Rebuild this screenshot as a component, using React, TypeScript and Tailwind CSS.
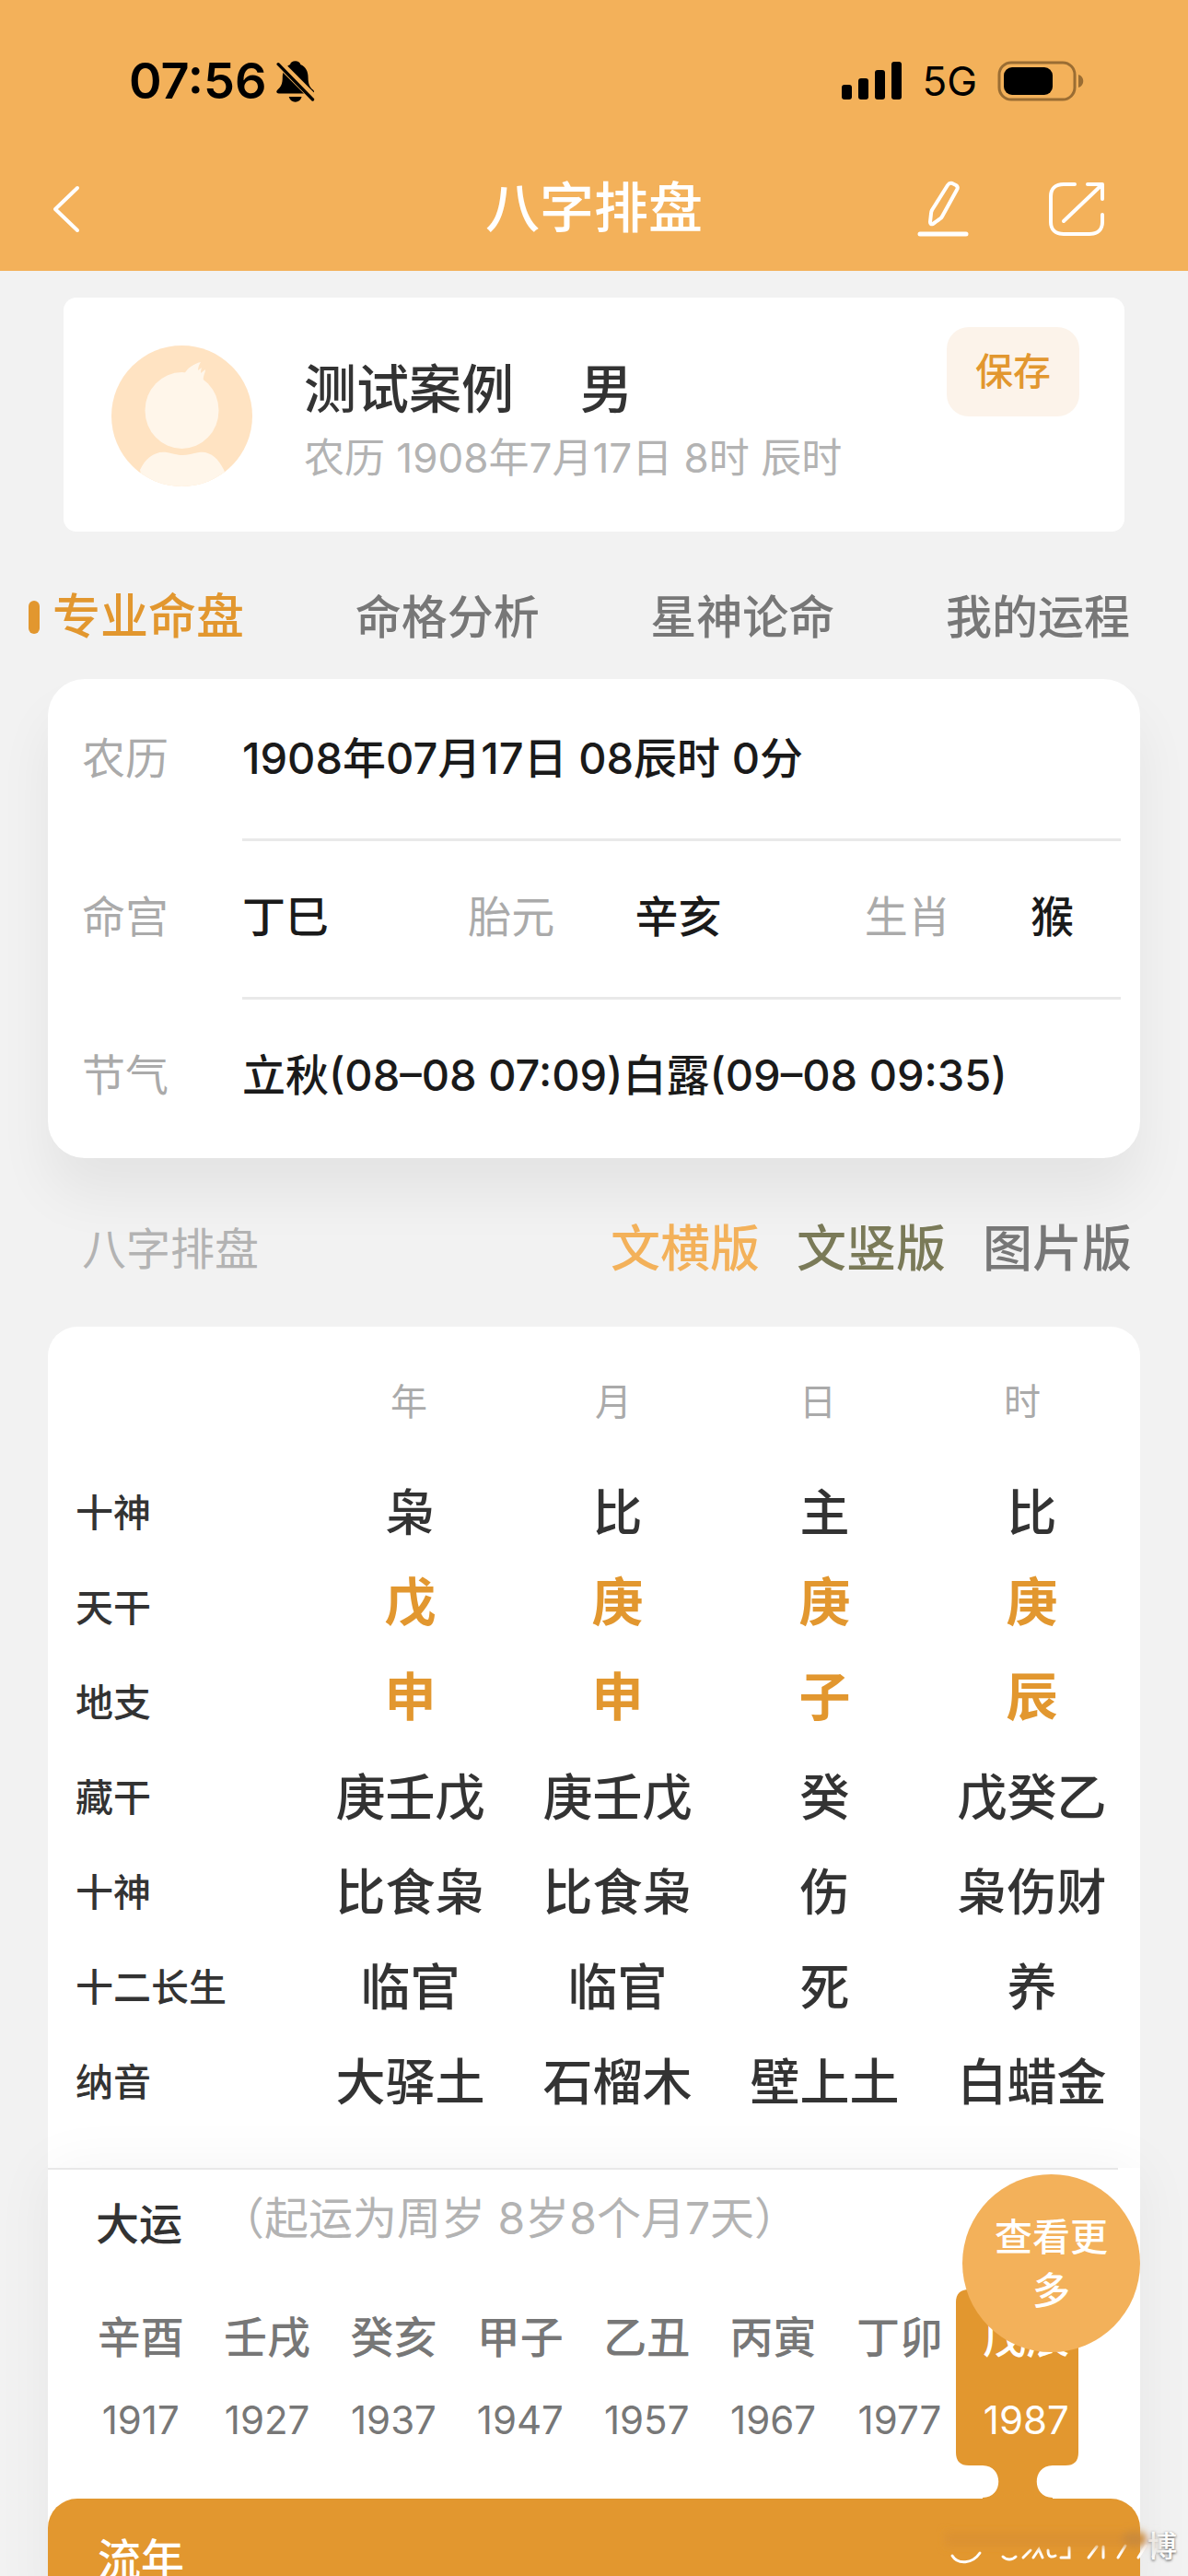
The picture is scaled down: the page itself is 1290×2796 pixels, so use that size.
const tabs = ["专业命盘", "命格分析", "星神论命", "我的运程"];

const pillars = ["年", "月", "日", "时"];

const chartRows = [
  { label: "十神", values: ["枭", "比", "主", "比"] },
  { label: "天干", values: ["戊", "庚", "庚", "庚"], gold: true },
  { label: "地支", values: ["申", "申", "子", "辰"], gold: true },
  { label: "藏干", values: ["庚壬戊", "庚壬戊", "癸", "戊癸乙"] },
  { label: "十神", values: ["比食枭", "比食枭", "伤", "枭伤财"] },
  { label: "十二长生", values: ["临官", "临官", "死", "养"] },
  { label: "纳音", values: ["大驿土", "石榴木", "壁上土", "白蜡金"] },
];

const luckCycles = [
  { name: "辛酉", year: 1917 },
  { name: "壬戌", year: 1927 },
  { name: "癸亥", year: 1937 },
  { name: "甲子", year: 1947 },
  { name: "乙丑", year: 1957 },
  { name: "丙寅", year: 1967 },
  { name: "丁卯", year: 1977 },
  { name: "戊辰", year: 1987, active: true },
];

function StatusBar() {
  return (
    <div className="flex h-[176px] items-center justify-between pl-[140px] pr-[113px] text-black">
      <div className="flex items-center gap-[10px]">
        <span className="text-[54px] font-semibold leading-none">07:56</span>
        <svg className="h-[47px] w-[42px]" viewBox="0 0 126 142">
          <path
            d="M62 4c9 0 15 4 17 11 17 7 25 22 25 43 0 22 6 32 17 41 5 5 2 11-4 11H8c-8 0-10-6-5-11 13-12 17-22 17-41 0-21 9-36 25-43 2-7 8-11 17-11Z"
            fill="#000"
          />
          <path d="M41 121h42c-3 11-11 17-21 17s-18-6-21-17Z" fill="#000" />
          <path d="M2 4 122 124" stroke="#f3b15a" strokeWidth="26" />
          <path d="M6 14 119 130" stroke="#000" strokeWidth="10" strokeLinecap="round" />
        </svg>
      </div>

      <div className="flex items-center gap-[22px]">
        <svg className="h-[42px] w-[65px]" viewBox="0 0 65 42">
          <rect x="0" y="25" width="11" height="16" rx="3" />
          <rect x="18" y="18" width="11" height="23" rx="3" />
          <rect x="36" y="9" width="11" height="32" rx="3" />
          <rect x="54" y="0" width="11" height="41" rx="3" />
        </svg>
        <span className="text-[44px] leading-none">5G</span>
        <svg className="h-[44px] w-[94px]" viewBox="0 0 94 44">
          <rect x="2" y="2" width="82" height="40" rx="13" fill="none" stroke="#9a6d33" strokeWidth="3" />
          <rect x="7" y="7" width="53" height="30" rx="9" />
          <path d="M88 15c7 2 7 12 0 14Z" fill="#9a6d33" />
        </svg>
      </div>
    </div>
  );
}

function NavBar() {
  return (
    <nav className="grid h-[118px] grid-cols-3 items-center pb-4 pl-14 pr-[90px] text-white">
      <button aria-label="返回" className="justify-self-start">
        <svg className="h-[52px] w-[32px]" viewBox="0 0 32 52" fill="none" stroke="currentColor" strokeWidth="4" strokeLinecap="round" strokeLinejoin="round">
          <path d="M28 3 4 26l24 23" />
        </svg>
      </button>

      <h1 className="justify-self-center whitespace-nowrap pb-1 pl-[34px] text-[59px] font-medium leading-none">八字排盘</h1>

      <div className="flex items-center gap-[86px] justify-self-end">
        <button aria-label="编辑">
          <svg className="h-[62px] w-[56px]" viewBox="0 0 56 62" fill="none" stroke="currentColor" strokeWidth="4" strokeLinecap="round" strokeLinejoin="round">
            <path d="M33 5q2-3 5-2l4 2q3 2 1 5L27 39q-1 2-3 3l-7 5q-3 1-3-2l1-9q0-2 1-4Z" />
            <path d="M3 58h50" strokeWidth="5" />
          </svg>
        </button>
        <button aria-label="分享">
          <svg className="h-[62px] w-[62px]" viewBox="0 0 62 62" fill="none" stroke="currentColor" strokeWidth="4" strokeLinecap="round" strokeLinejoin="round">
            <path d="M29 4H17C8 4 3 9 3 17v28c0 8 5 13 14 13h28c9 0 14-5 14-13v-8" />
            <path d="M43 4h16v16M58 5 17 44" />
          </svg>
        </button>
      </div>
    </nav>
  );
}

function Avatar() {
  return (
    <svg className="h-[153px] w-[153px] shrink-0" viewBox="0 0 153 153">
      <clipPath id="avatar">
        <circle cx="76.5" cy="76.5" r="76.5" />
      </clipPath>
      <g clipPath="url(#avatar)" fill="#fff6ea">
        <rect width="153" height="153" fill="#ffe3c2" />
        <ellipse cx="76.5" cy="70.5" rx="40" ry="41.5" />
        <path d="M79 31c4-7 10-11 18-13-2 3-3 6-3 9l4-3c-1 3-1 4-1 6l5-4c0 4-3 7-2 13l-8 4Z" />
        <path d="M31 135c6-13 17-21 29-19 7 1 11 3 17 3s11-2 18-3c12-2 22 7 28 21l-6 20H36Z" />
      </g>
    </svg>
  );
}

function ProfileCard() {
  return (
    <section className="mx-[69px] mt-[29px] flex h-[254px] rounded-[14px] bg-white pl-[52px] pr-[49px]">
      <div className="flex flex-1 pt-[52px]">
        <Avatar />
        <div className="pl-14 pt-[14px]">
          <h2 className="flex gap-[72px] text-[57px] font-medium leading-[68px] text-[#333]">
            <span>测试案例</span>
            <span>男</span>
          </h2>
          <p className="pt-[6px] text-[44px] leading-[68px] text-[#b3b3b3]">农历 1908年7月17日 8时 辰时</p>
        </div>
      </div>
      <button className="mt-8 h-[97px] w-[144px] rounded-3xl bg-[#fcf3ea] text-[41px] font-medium text-[#e2972f]">
        保存
      </button>
    </section>
  );
}

function Tabs() {
  return (
    <div className="flex h-[160px] items-center justify-between pl-[31px] pr-[63px] pt-[26px]">
      {tabs.map((tab, i) =>
        i === 0 ? (
          <button key={tab} className="flex items-center gap-[14px] text-[52px] font-medium leading-none text-[#e2972f]">
            <span className="h-[36px] w-3 rounded-full bg-[#e2972f]" />
            {tab}
          </button>
        ) : (
          <button key={tab} className="text-[50px] font-medium leading-none text-[#777]">
            {tab}
          </button>
        )
      )}
    </div>
  );
}

function InfoCard() {
  return (
    <dl className="mx-[52px] rounded-[40px] bg-white pt-1 text-[47px] leading-none text-[#1a1a1a] shadow-[0_40px_60px_rgba(0,0,0,0.06)]">
      <div className="flex h-[172px] pl-[37px] pr-[21px]">
        <dt className="flex w-[174px] items-center pb-[10px] text-[#aaa]">农历</dt>
        <dd className="flex flex-1 items-center border-b-3 border-[#e9e9e9] pb-[7px] font-medium">
          1908年07月17日 08辰时 0分
        </dd>
      </div>

      <div className="flex h-[172px] pl-[37px] pr-[21px]">
        <dt className="flex w-[174px] items-center pb-[10px] text-[#aaa]">命宫</dt>
        <dd className="grid flex-1 grid-cols-[245fr_181fr_249fr_180fr_98fr] items-center border-b-3 border-[#e9e9e9] pb-[7px] font-medium">
          <span>丁巳</span>
          <span className="font-normal text-[#aaa]">胎元</span>
          <span>辛亥</span>
          <span className="font-normal text-[#aaa]">生肖</span>
          <span>猴</span>
        </dd>
      </div>

      <div className="flex h-[172px] pl-[37px] pr-[21px]">
        <dt className="flex w-[174px] items-center pb-[10px] text-[#aaa]">节气</dt>
        <dd className="flex flex-1 items-center whitespace-nowrap pb-[10px] font-medium">
          立秋(08–08 07:09)白露(09–08 09:35)
        </dd>
      </div>
    </dl>
  );
}

function ChartTable() {
  return (
    <table className="mx-[52px] block rounded-t-[32px] bg-white pb-[41px] text-[#333]">
      <thead className="block">
        <tr className="grid h-[151px] grid-cols-[281px_repeat(4,1fr)] items-center pr-[17px] pt-3 text-[40px] leading-none text-[#aaa]">
          <td />
          {pillars.map((p) => (
            <th key={p} className="font-normal">{p}</th>
          ))}
        </tr>
      </thead>
      <tbody className="block">
        {chartRows.map((row, i) => (
          <tr key={i} className="grid h-[103px] grid-cols-[281px_repeat(4,1fr)] items-center pr-[5px] leading-none">
            <th className="whitespace-nowrap pl-[30px] text-left text-[41px] font-medium">{row.label}</th>
            {row.values.map((v, j) => (
              <td
                key={j}
                className={
                  row.gold
                    ? "whitespace-nowrap pb-[14px] text-center text-[56px] font-bold text-[#e2972f]"
                    : "whitespace-nowrap text-center text-[54px] font-medium"
                }
              >
                {v}
              </td>
            ))}
          </tr>
        ))}
      </tbody>
    </table>
  );
}

function LuckSection() {
  return (
    <section className="relative mx-[52px] bg-white shadow-[0_0_60px_rgba(0,0,0,0.05)]">
      <div className="mr-6 h-[2px] bg-[#e8e8e8]" />

      <div className="flex h-[118px] items-center gap-[41px] pl-[52px] leading-none">
        <h3 className="pb-[2px] text-[47px] font-medium text-[#333]">大运</h3>
        <p className="pb-3 text-[48px] text-[#b3b3b3]">（起运为周岁 8岁8个月7天）</p>
      </div>

      <div className="mt-5 grid grid-cols-8 pb-[39px] pl-[32px] pr-[55px] text-center text-[#777]">
        {luckCycles.map((c) => (
          <button key={c.year} className={c.active ? "relative text-white" : ""}>
            {c.active && (
              <svg className="absolute -left-2 -top-2 h-[228px] w-[133px]" viewBox="0 0 133 228" fill="#e2972f">
                <path d="M14 0H119Q133 0 133 14V177Q133 191 119 191H105C82 191 82 226 105 226V228H29V226C52 226 52 191 29 191H14Q0 191 0 177V14Q0 0 14 0Z" />
              </svg>
            )}
            <span className="relative block text-[47px] font-medium leading-[88px]">{c.name}</span>
            <span className="relative block text-[42px] leading-[92px]">{c.year}</span>
          </button>
        ))}
      </div>

      <div className="rounded-t-[32px] bg-[#e2972f] pb-9 pl-[54px] pt-9">
        <h3 className="text-[47px] font-medium leading-[60px] text-white">流年</h3>
      </div>

      <button className="absolute right-0 top-[7px] h-[193px] w-[193px] rounded-full bg-[#f3b15a] px-8 text-[41px] font-medium leading-[58px] text-white">
        查看更多
      </button>
    </section>
  );
}

function Watermark() {
  return (
    <div className="pointer-events-none absolute bottom-0 right-0 flex h-[60px] w-[280px] items-center justify-end pb-1 pr-3">
      <span className="text-[32px] font-medium leading-none text-white [text-shadow:0_1px_3px_rgba(0,0,0,0.7)]">博</span>
      <svg className="absolute inset-0 h-full w-full" viewBox="0 0 280 60">
        <defs>
          <filter id="smear" x="-20%" y="-50%" width="140%" height="200%">
            <feGaussianBlur stdDeviation="4" />
          </filter>
        </defs>
        <g fill="none" stroke="#fff" strokeWidth="3" strokeLinecap="round">
          <path d="M24 38c6 10 22 9 30-3M79 39c4 4 10 4 14 0M101 40l8-8M112 40l6-9 4 9M128 32c0 8 4 8 8 6M142 40h9v-11M172 40l9-12M188 40V28M204 40l8-13M226 40l8-13M242 39l3-8" />
        </g>
        <g filter="url(#smear)">
          <rect x="16" y="12" width="200" height="16" fill="#dc9230" />
          <ellipse cx="222" cy="20" rx="14" ry="9" fill="#cb8a3a" />
          <ellipse cx="246" cy="26" rx="7" ry="12" fill="#e6e2dd" />
        </g>
      </svg>
    </div>
  );
}

export default function App() {
  return (
    <div className="relative flex h-screen flex-col overflow-hidden bg-[#f2f2f2] font-[Inter,'Noto_Sans_CJK_SC',sans-serif]" lang="zh-CN">
      <header className="bg-[#f3b15a]">
        <StatusBar />
        <NavBar />
      </header>

      <ProfileCard />
      <Tabs />

      {/* Scrolling content */}
      <main className="min-h-0 flex-1 overflow-y-auto [scrollbar-width:none]">
        <InfoCard />

        <div className="flex h-[183px] items-center justify-between pl-[89px] pr-[61px] pt-[14px] leading-none">
          <h2 className="text-[48px] text-[#b3b3b3]">八字排盘</h2>
          <div className="flex gap-10 text-[54px] font-medium">
            <button className="text-[#f3b15a]">文横版</button>
            <button className="text-[#7a7a58]">文竖版</button>
            <button className="text-[#777]">图片版</button>
          </div>
        </div>

        <ChartTable />
        <LuckSection />
      </main>

      <Watermark />
    </div>
  );
}
